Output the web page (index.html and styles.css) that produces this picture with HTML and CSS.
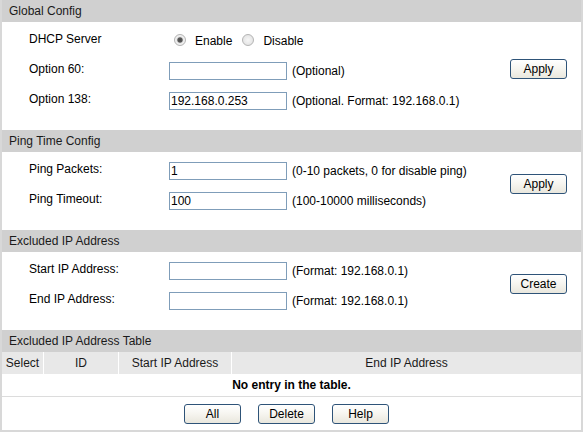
FILE: index.html
```html
<!DOCTYPE html>
<html>
<head>
<meta charset="utf-8">
<link rel="stylesheet" href="styles.css">
</head>
<body>
<div class="page">
  <section class="sec">
    <div class="sec-head">Global Config</div>
    <div class="sec-body">
      <div class="rows">
        <div class="row">
          <span class="lbl">DHCP Server</span>
          <div class="radios">
            <input class="radio" type="radio" name="dhcp" checked><span class="rtext">Enable</span>
            <input class="radio" type="radio" name="dhcp"><span class="rtext">Disable</span>
          </div>
        </div>
        <div class="row">
          <span class="lbl">Option 60:</span>
          <input class="txt" type="text" value="">
          <span class="hint">(Optional)</span>
        </div>
        <div class="row">
          <span class="lbl">Option 138:</span>
          <input class="txt" type="text" value="192.168.0.253">
          <span class="hint">(Optional. Format: 192.168.0.1)</span>
        </div>
      </div>
      <div class="act"><button class="btn">Apply</button></div>
    </div>
  </section>

  <section class="sec">
    <div class="sec-head">Ping Time Config</div>
    <div class="sec-body">
      <div class="rows">
        <div class="row">
          <span class="lbl">Ping Packets:</span>
          <input class="txt" type="text" value="1">
          <span class="hint">(0-10 packets, 0 for disable ping)</span>
        </div>
        <div class="row">
          <span class="lbl">Ping Timeout:</span>
          <input class="txt" type="text" value="100">
          <span class="hint">(100-10000 milliseconds)</span>
        </div>
      </div>
      <div class="act"><button class="btn">Apply</button></div>
    </div>
  </section>

  <section class="sec">
    <div class="sec-head">Excluded IP Address</div>
    <div class="sec-body">
      <div class="rows">
        <div class="row">
          <span class="lbl">Start IP Address:</span>
          <input class="txt" type="text" value="">
          <span class="hint">(Format: 192.168.0.1)</span>
        </div>
        <div class="row">
          <span class="lbl">End IP Address:</span>
          <input class="txt" type="text" value="">
          <span class="hint">(Format: 192.168.0.1)</span>
        </div>
      </div>
      <div class="act"><button class="btn">Create</button></div>
    </div>
  </section>

  <section class="sec">
    <div class="sec-head">Excluded IP Address Table</div>
    <div class="tbl">
      <div class="th">Select</div>
      <div class="th">ID</div>
      <div class="th">Start IP Address</div>
      <div class="th">End IP Address</div>
      <div class="empty">No entry in the table.</div>
    </div>
    <div class="bottom-btns">
      <button class="btn">All</button>
      <button class="btn">Delete</button>
      <button class="btn">Help</button>
    </div>
  </section>
</div>
</body>
</html>
```

FILE: styles.css
```css
html, body {
  margin: 0;
  padding: 0;
  background: #fff;
}
body {
  font-family: "Liberation Sans", Arial, sans-serif;
  font-size: 12px;
  color: #000;
}
.page {
  width: 583px;
  height: 432px;
  box-sizing: border-box;
  border-left: 2px solid #d8d8d8;
  border-right: 2px solid #d8d8d8;
  border-bottom: 2px solid #d8d8d8;
  overflow: hidden;
}
.sec-head {
  height: 22px;
  line-height: 22px;
  background: #d0d0d0;
  padding-left: 7px;
  color: #1a1a1a;
}
.sec-body {
  display: flex;
  padding: 4px 0 14px;
}
.rows {
  flex: 1;
}
.row {
  display: flex;
  align-items: center;
  height: 30px;
}
.lbl {
  flex: 0 0 140px;
  margin-left: 27px;
  padding-bottom: 5px;
}
.radios {
  display: flex;
  align-items: center;
  margin-left: 5px;
}
.radio {
  appearance: none;
  -webkit-appearance: none;
  width: 12px;
  height: 12px;
  margin: 0 9px 2px 0;
  border: 1px solid #b4b4b4;
  border-radius: 50%;
  box-sizing: border-box;
  background: radial-gradient(circle, #f6f6f6 0, #dedede 100%);
}
.radio:checked {
  background: radial-gradient(circle, #4a4a4a 0, #5a5a5a 2.2px, #e6e6e6 3.2px, #f2f2f2 4.5px, #d6d6d6 100%);
}
.rtext {
  margin-right: 10px;
}
.txt {
  width: 118px;
  height: 18px;
  box-sizing: border-box;
  border: 1px solid #7f9db9;
  padding: 0 1px;
  margin: 0;
  font-family: "Liberation Sans", Arial, sans-serif;
  font-size: 12px;
  color: #000;
  background: #fff;
  outline: none;
}
.hint {
  margin-left: 5px;
}
.act {
  display: flex;
  align-items: center;
  padding-right: 14px;
  padding-bottom: 4px;
}
.btn {
  width: 57px;
  height: 20px;
  box-sizing: border-box;
  border: 1px solid #2e5378;
  border-radius: 3px;
  background: linear-gradient(#ffffff 0%, #f7f6f1 45%, #e9e7dd 100%);
  font-family: "Liberation Sans", Arial, sans-serif;
  font-size: 12px;
  color: #000;
  padding: 0;
  margin: 0;
}
.tbl {
  display: grid;
  grid-template-columns: 41px 74px 112px 1fr;
  column-gap: 1px;
}
.th {
  height: 22px;
  line-height: 22px;
  background: #e8e8e8;
  text-align: center;
  color: #1a1a1a;
}
.empty {
  grid-column: 1 / -1;
  height: 22px;
  line-height: 22px;
  text-align: center;
  font-weight: bold;
  border-bottom: 1px solid #dcdcdc;
}
.bottom-btns {
  display: flex;
  justify-content: center;
  gap: 17px;
  padding-top: 7px;
  padding-right: 10px;
}
```
